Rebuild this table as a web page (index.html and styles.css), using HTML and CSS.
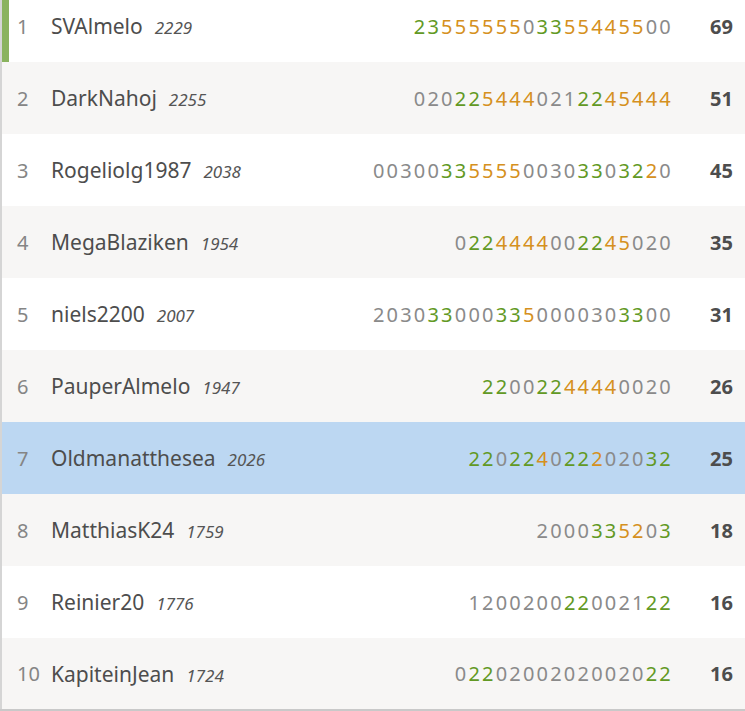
FILE: index.html
```html
<!DOCTYPE html>
<html lang="en">
  <head>
    <meta charset="UTF-8" />
    <meta name="viewport" content="width=device-width, initial-scale=1.0" />
    <title>Arena standings</title>
    <link rel="stylesheet" href="styles.css">
  </head>
  <body>
    <div class="standing_wrap">
      <table class="standing">
        <tbody>
          <tr class="leader">
            <td class="rank">1</td>
            <td class="player"><span class="name">SVAlmelo</span><em class="rating">2229</em></td>
            <td class="sheet"><i class="s">23</i><i class="d">555555</i>0<i class="s">33</i><i class="d">554455</i>00</td>
            <td class="total">69</td>
          </tr>
          <tr>
            <td class="rank">2</td>
            <td class="player"><span class="name">DarkNahoj</span><em class="rating">2255</em></td>
            <td class="sheet">020<i class="s">22</i><i class="d">5444</i>021<i class="s">22</i><i class="d">45444</i></td>
            <td class="total">51</td>
          </tr>
          <tr>
            <td class="rank">3</td>
            <td class="player"><span class="name">Rogeliolg1987</span><em class="rating">2038</em></td>
            <td class="sheet">00300<i class="s">33</i><i class="d">5555</i>0030<i class="s">33</i>0<i class="s">32</i><i class="d">2</i>0</td>
            <td class="total">45</td>
          </tr>
          <tr>
            <td class="rank">4</td>
            <td class="player"><span class="name">MegaBlaziken</span><em class="rating">1954</em></td>
            <td class="sheet">0<i class="s">22</i><i class="d">4444</i>00<i class="s">22</i><i class="d">45</i>020</td>
            <td class="total">35</td>
          </tr>
          <tr>
            <td class="rank">5</td>
            <td class="player"><span class="name">niels2200</span><em class="rating">2007</em></td>
            <td class="sheet">2030<i class="s">33</i>000<i class="s">33</i><i class="d">5</i>000030<i class="s">33</i>00</td>
            <td class="total">31</td>
          </tr>
          <tr>
            <td class="rank">6</td>
            <td class="player"><span class="name">PauperAlmelo</span><em class="rating">1947</em></td>
            <td class="sheet"><i class="s">22</i>00<i class="s">22</i><i class="d">4444</i>0020</td>
            <td class="total">26</td>
          </tr>
          <tr class="me">
            <td class="rank">7</td>
            <td class="player"><span class="name">Oldmanatthesea</span><em class="rating">2026</em></td>
            <td class="sheet"><i class="s">22</i>0<i class="s">22</i><i class="d">4</i>0<i class="s">22</i><i class="d">2</i>020<i class="s">32</i></td>
            <td class="total">25</td>
          </tr>
          <tr>
            <td class="rank">8</td>
            <td class="player"><span class="name">MatthiasK24</span><em class="rating">1759</em></td>
            <td class="sheet">2000<i class="s">33</i><i class="d">52</i>0<i class="s">3</i></td>
            <td class="total">18</td>
          </tr>
          <tr>
            <td class="rank">9</td>
            <td class="player"><span class="name">Reinier20</span><em class="rating">1776</em></td>
            <td class="sheet">1200200<i class="s">22</i>0021<i class="s">22</i></td>
            <td class="total">16</td>
          </tr>
          <tr>
            <td class="rank">10</td>
            <td class="player"><span class="name">KapiteinJean</span><em class="rating">1724</em></td>
            <td class="sheet">0<i class="s">22</i>02002020020<i class="s">22</i></td>
            <td class="total">16</td>
          </tr>
        </tbody>
      </table>
    </div>
  </body>
</html>
```

FILE: styles.css
```css
html,
body {
  margin: 0;
  background: #fff;
}
body {
  font-family: "Noto Sans", sans-serif;
  color: #4d4d4d;
  overflow: hidden;
}
.standing_wrap {
  margin-top: -10px;
}
.standing {
  width: 745px;
  border-collapse: collapse;
  border-left: 2px solid #d5d5d5;
  border-bottom: 2px solid #c9c9c9;
}
.standing tr {
  height: 72px;
}
.standing tr:nth-child(even) {
  background: #f7f6f5;
}
.standing tr.me {
  background: #bcd7f2;
}
.standing td {
  padding: 0;
  white-space: nowrap;
}
.rank {
  width: 34px;
  padding-left: 15px !important;
  font-size: 20px;
  color: #858585;
}
.leader .rank {
  box-shadow: inset 7px 0 0 #8ab35e;
}
.player {
  font-size: 21px;
}
.name {
  color: #4d4d4d;
}
.rating {
  margin-left: 12px;
  font-size: 17px;
  color: #555;
}
.sheet {
  text-align: right;
  font-size: 20px;
  letter-spacing: 2.2px;
  color: #8a8a8a;
  padding-right: 28px !important;
}
.sheet i {
  font-style: normal;
}
.sheet .s {
  color: #629924;
}
.sheet .d {
  color: #d59020;
}
.total {
  width: 32px;
  padding-right: 12px !important;
  text-align: right;
  font-size: 20px;
  font-weight: 700;
  color: #4d4d4d;
}
```
